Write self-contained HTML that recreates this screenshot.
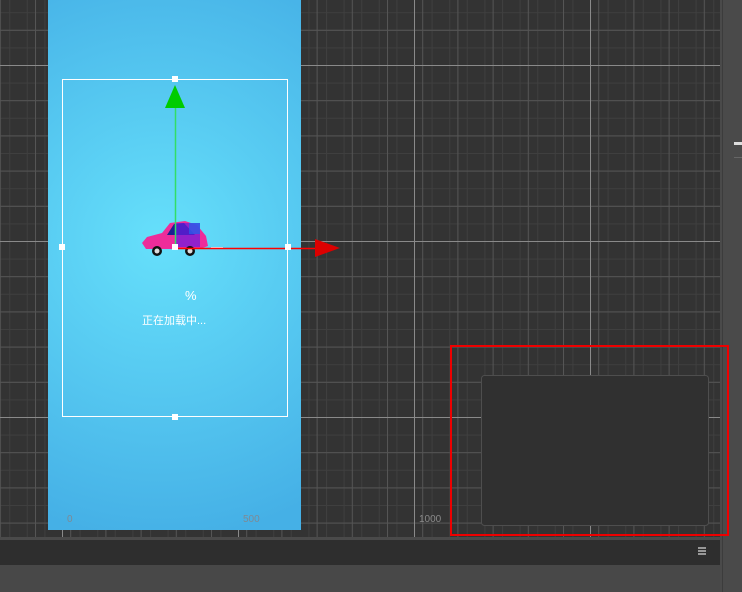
<!DOCTYPE html>
<html><head><meta charset="utf-8"><style>
html,body{margin:0;padding:0;width:742px;height:592px;overflow:hidden;background:#333;font-family:"Liberation Sans","Noto Sans CJK SC",sans-serif}
.abs{position:absolute}
</style></head><body>
<svg class="abs" style="left:0;top:0" width="742" height="592" xmlns="http://www.w3.org/2000/svg">
<defs>
<pattern id="fine" x="9.2" y="12.2" width="17.6" height="17.6" patternUnits="userSpaceOnUse"><path d="M0 0.5H17.6M0.5 0V17.6" stroke="#3f3f3f" stroke-width="1" fill="none"/></pattern>
<pattern id="med" x="-0.2" y="-5.4" width="35.2" height="35.2" patternUnits="userSpaceOnUse"><path d="M0 0.5H35.2M0.5 0V35.2" stroke="#555" stroke-width="1" fill="none"/></pattern>
<pattern id="maj" x="62" y="65" width="176" height="176" patternUnits="userSpaceOnUse"><path d="M0 0.5H176M0.5 0V176" stroke="#8a8a8a" stroke-width="1" fill="none"/></pattern>
<pattern id="tick" x="9.2" y="0" width="17.6" height="10" patternUnits="userSpaceOnUse"><path d="M0.5 0V10" stroke="#555" stroke-width="1"/></pattern>
<radialGradient id="bg" cx="160" cy="240" r="300" gradientUnits="userSpaceOnUse"><stop offset="0" stop-color="#66e0fb"/><stop offset="1" stop-color="#45b0e6"/></radialGradient>
</defs>
<rect x="0" y="0" width="720" height="538" fill="#333"/>
<rect x="0" y="0" width="720" height="538" fill="url(#fine)"/>
<rect x="0" y="0" width="720" height="538" fill="url(#med)"/>
<rect x="0" y="0" width="720" height="538" fill="url(#maj)"/>
<rect x="48" y="0" width="253" height="530" fill="url(#bg)"/>
<rect x="62.5" y="79.5" width="225" height="337" fill="none" stroke="#fff" stroke-width="1"/>
<text x="67" y="522" font-size="10" fill="#7d8a95" font-family="Liberation Sans">0</text>
<text x="243" y="522" font-size="10" fill="#7d8a95" font-family="Liberation Sans">500</text>
<text x="419" y="522" font-size="10" fill="#8a8a8a" font-family="Liberation Sans">1000</text>
<!-- bottom panels -->
<rect x="0" y="537" width="720" height="3" fill="#4a4a4a"/>
<rect x="0" y="540" width="720" height="25" fill="#2e2e2e"/>
<rect x="0" y="565" width="720" height="27" fill="#484848"/>
<rect x="720" y="0" width="22" height="592" fill="#4a4a4a"/>
<rect x="722" y="0" width="1" height="592" fill="#3c3c3c"/>
<rect x="734" y="142" width="8" height="3" fill="#ddd"/>
<rect x="734" y="157" width="8" height="1" fill="#666"/>
<path d="M698 548h8M698 551h8M698 554h8" stroke="#bbb" stroke-width="1.5"/>
<!-- red box -->
<rect x="451" y="346" width="277" height="189" fill="none" stroke="#e00" stroke-width="2"/>
<rect x="481.5" y="375.5" width="227" height="150" rx="3" fill="#303030" stroke="#4e4e4e"/>
<!-- car -->
<g>
<path d="M142 243 L147 237 L162 233 L170 223 L185 221 L197 225 L206 236 L208 246 L200 249 L146 249 Z" fill="#ee2c9a"/>
<path d="M167 235 L174 224 L184 223 L195 235 Z" fill="#1a2090"/>
<path d="M175 223 L200 223 L200 247 L175 247 Z" fill="#6a1de0" opacity="0.7"/>
<rect x="189" y="223" width="11" height="11" fill="#2a5be8" opacity="0.8"/>
<circle cx="157" cy="251" r="5" fill="#111"/><circle cx="157" cy="251" r="2.5" fill="#ddd"/>
<circle cx="190" cy="251" r="5" fill="#111"/><circle cx="190" cy="251" r="2.5" fill="#ddd"/>
<path d="M211 248h12" stroke="#e8f8ff" stroke-width="2"/>
</g>
<!-- gizmo -->
<line x1="175.5" y1="247" x2="175.5" y2="105" stroke="#33dd66" stroke-width="1.5"/>
<path d="M175 85 L185 108 L165 108 Z" fill="#0c0"/>
<line x1="175" y1="248.5" x2="318" y2="248.5" stroke="#f00" stroke-width="1.5"/>
<path d="M315 239 L340 248 L315 257 Z" fill="#d00"/>
<g fill="#fff">
<rect x="172" y="76" width="6" height="6"/>
<rect x="59" y="244" width="6" height="6"/>
<rect x="285" y="244" width="6" height="6"/>
<rect x="172" y="414" width="6" height="6"/>
<rect x="172" y="244" width="6" height="6"/>
</g>
<text x="185" y="300" font-size="13" fill="#fff" font-family="Liberation Sans">%</text>
<text x="142" y="324" font-size="11" fill="#fff" font-family="Liberation Sans, Noto Sans CJK SC, sans-serif">正在加载中...</text>
</svg>
</body></html>
